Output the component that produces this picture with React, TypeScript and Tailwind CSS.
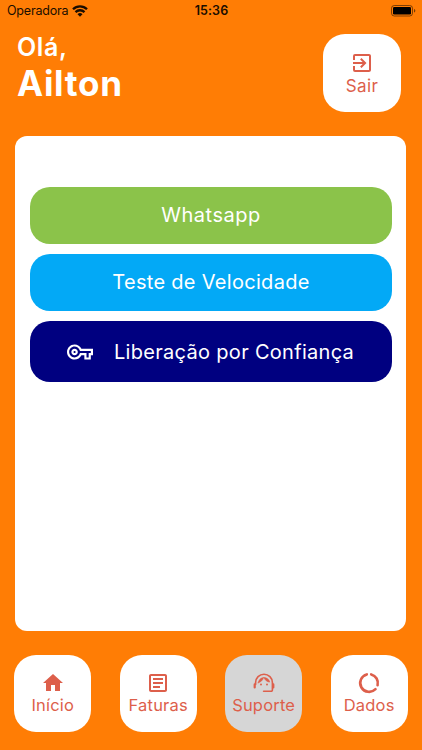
import type { ReactNode } from "react";
import { MdExitToApp, MdHome, MdOutlineArticle, MdOutlineVpnKey } from "react-icons/md";

function WifiIcon() {
  return (
    <svg width="16" height="12" viewBox="0 0 16 12" fill="none" stroke="#1a0d00" strokeWidth="2.3">
      <path d="M1 4.300a10 10 0 0 1 14 0" />
      <path d="M3.500 7.100a6.400 6.400 0 0 1 9 0" />
      <path d="M8 11.800 5.500 9.200a3.500 3.500 0 0 1 5 0z" fill="#1a0d00" stroke="none" />
    </svg>
  );
}

function BatteryIcon() {
  return (
    <svg width="25" height="12" viewBox="0 0 25 12">
      <rect x="0.5" y="0.5" width="21" height="10.5" rx="2.8" fill="none" stroke="#1a0d00" strokeOpacity="0.55" />
      <rect x="2" y="2" width="18" height="7.5" rx="1.3" fill="#000" />
      <path d="M23 4v3.5c.9-.3 1.3-1 1.3-1.750S23.900 4.300 23 4z" fill="#1a0d00" fillOpacity="0.6" />
    </svg>
  );
}

function DataRingIcon() {
  return (
    <svg width="24" height="24" viewBox="0 0 24 24" fill="none" stroke="currentColor" strokeWidth="2.6" strokeLinecap="round">
      <path d="M14.200 3.400a8.900 8.900 0 0 1 6.400 10.800" />
      <path d="M9.800 3.400a8.900 8.900 0 1 0 8.700 14.800" />
    </svg>
  );
}

function SupportIcon() {
  return (
    <svg width="24" height="24" viewBox="0 0 24 24" fill="none" stroke="currentColor" strokeLinecap="round">
      <path d="M3.600 13.500v-1.900a8.400 8.400 0 0 1 16.800 0v7.400a1.200 1.200 0 0 1-1.200 1.200h-7.600" strokeWidth="1.600" />
      <path d="M2.700 13.400v3M21.300 13.400v3" strokeWidth="2.200" />
      <path d="M6.200 11.800c.5-2.900 2.600-5 5.300-5.200-.5 2.500-2.500 4.500-5.300 5.200z" fill="currentColor" strokeWidth="0.6" />
      <path d="M12 6.600c2.900 0 5.200 1.900 5.700 4.500-2.600-.1-4.700-1.800-5.700-4.500z" fill="currentColor" strokeWidth="0.6" />
      <circle cx="9" cy="13.500" r="0.950" fill="currentColor" stroke="none" />
      <circle cx="15" cy="13.500" r="0.950" fill="currentColor" stroke="none" />
    </svg>
  );
}

function Tile({ icon, label, active = false }: { icon: ReactNode; label: string; active?: boolean }) {
  return (
    <button
      className={`flex h-[77px] w-[77px] flex-col items-center rounded-[22px] pt-4 text-[#dd5f4b] ${active ? "bg-[#d6d6d6]" : "bg-white"}`}
    >
      {icon}
      <span className="text-[16.500px] leading-5 tracking-[0.2px]">{label}</span>
    </button>
  );
}

export default function App() {
  return (
    <div className="flex h-[750px] w-[422px] flex-col overflow-hidden bg-[#ff7d05] font-['Inter','Liberation_Sans',sans-serif]">
      <div className="grid h-[22px] grid-cols-3 items-center pr-[6px] pl-[7px] text-[#1a0d00]">
        <div className="flex items-center gap-1 text-[12.500px] tracking-[-0.2px]">
          Operadora
          <WifiIcon />
        </div>
        <div className="text-center text-[12.500px] font-semibold tracking-[0.1px]">15:36</div>
        <div className="flex justify-end">
          <BatteryIcon />
        </div>
      </div>

      <header className="flex h-[113.500px] justify-between pt-3 pr-[21px] pl-[17px]">
        <div className="-mt-px font-semibold text-white">
          <div className="text-[25px] leading-[28px] tracking-[0.6px]">Olá,</div>
          <div className="text-[35px] leading-[44px] font-bold tracking-[0.7px]">Ailton</div>
        </div>
        <button className="flex h-[78px] w-[78px] flex-col items-center rounded-[22px] bg-white pt-[17px] text-[#dd5f4b]">
          <MdExitToApp size={24} />
          <span className="text-[17px] leading-[22px] tracking-[0.4px]">Sair</span>
        </button>
      </header>

      <main className="mr-4 ml-[15px] flex h-[495.500px] flex-col gap-[10px] rounded-xl bg-white pt-[51px] pr-[14px] pl-[15px] text-[20px] tracking-[0.3px] text-white">
        <button className="h-[57px] rounded-[20px] bg-[#8bc34a] tracking-[0.5px]">Whatsapp</button>
        <button className="h-[57px] rounded-[20px] bg-[#03a9f6]">Teste de Velocidade</button>
        <button className="flex h-[61px] items-center rounded-[20px] bg-[#000080] pt-px pl-[37px]">
          <MdOutlineVpnKey size={26} />
          <span className="ml-[21px]">Liberação por Confiança</span>
        </button>
      </main>

      <nav className="mt-[23.500px] flex justify-between pr-[14.400px] pl-[14.300px]">
        <Tile icon={<MdHome size={24} />} label="Início" />
        <Tile icon={<MdOutlineArticle size={24} />} label="Faturas" />
        <Tile icon={<SupportIcon />} label="Suporte" active />
        <Tile icon={<DataRingIcon />} label="Dados" />
      </nav>
    </div>
  );
}
